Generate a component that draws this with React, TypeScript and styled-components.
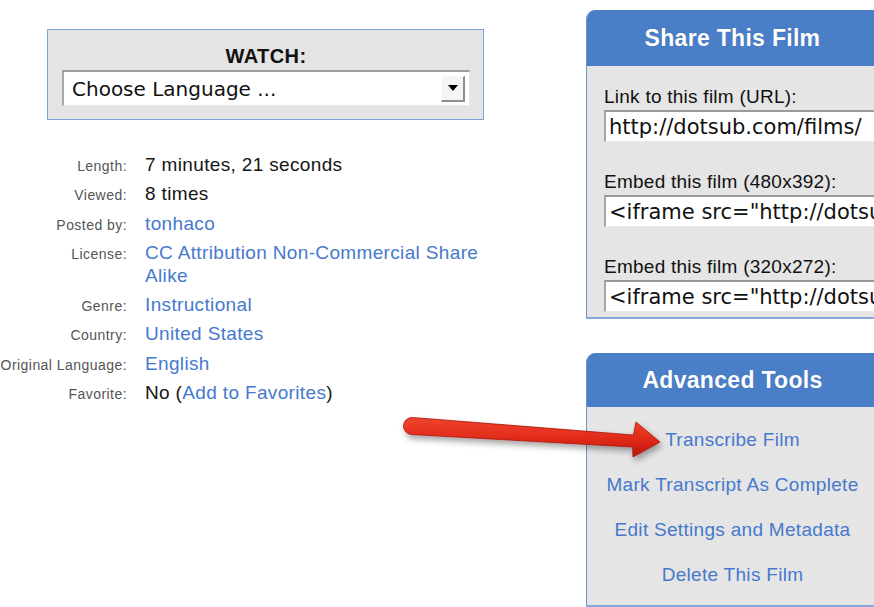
import { Fragment, type ReactNode } from "react";
import styled, { createGlobalStyle } from "styled-components";

const GlobalStyle = createGlobalStyle`
  html, body {
    margin: 0;
    padding: 0;
    overflow: hidden;
    background: #fff;
  }
  body {
    font-family: "Liberation Sans", Arial, Helvetica, sans-serif;
  }
`;

const LINK_BLUE = "#4679cd";

const Page = styled.div`
  position: relative;
  display: flex;
  width: 878px;
  height: 607px;
`;

const MainColumn = styled.div`
  width: 586px;
  flex-shrink: 0;
  padding-top: 29px;
`;

const SideColumn = styled.div`
  width: 292px;
  flex-shrink: 0;
  padding-top: 10px;
  display: flex;
  flex-direction: column;
  gap: 34px;
`;

/* ---- watch box ---- */

const WatchBox = styled.div`
  margin-left: 47px;
  box-sizing: content-box;
  width: 408px;
  background: #e4e4e4;
  border: 1px solid #7ea1d8;
  padding: 14px 13px 13px 14px;
`;

const WatchTitle = styled.div`
  font-weight: bold;
  font-size: 20px;
  line-height: 24px;
  text-align: center;
  color: #111;
  letter-spacing: 0.4px;
`;

const LanguageSelect = styled.div`
  margin-top: 2px;
  height: 33px;
  display: flex;
  align-items: center;
  justify-content: space-between;
  background: #fff;
  border-top: 2px solid #9c9c9c;
  border-left: 2px solid #a6a6a6;
  border-right: 1px solid #e8e8e8;
  border-bottom: 1px solid #ececec;
  padding-left: 8px;
  padding-right: 4px;
  font-family: "DejaVu Sans", sans-serif;
  font-size: 20px;
  color: #111;
`;

const SelectButton = styled.div`
  width: 21px;
  height: 23px;
  background: #f4f4f4;
  border-top: 1px solid #fafafa;
  border-left: 1px solid #fafafa;
  border-right: 2px solid #8e8e8e;
  border-bottom: 2px solid #8e8e8e;
  display: flex;
  align-items: center;
  justify-content: center;

  &::after {
    content: "";
    border-left: 5px solid transparent;
    border-right: 5px solid transparent;
    border-top: 6px solid #000;
  }
`;

/* ---- film details ---- */

const DetailGrid = styled.div`
  margin-top: 33px;
  display: grid;
  grid-template-columns: 127px 360px;
  column-gap: 18px;
  row-gap: 6.3px;
  align-items: baseline;
`;

const DetailLabel = styled.div`
  font-size: 14px;
  letter-spacing: 0.45px;
  color: #555;
  text-align: right;
  white-space: nowrap;
  direction: rtl;
`;

const DetailValue = styled.div`
  font-size: 19px;
  line-height: 23px;
  letter-spacing: 0.35px;
  color: #151515;
`;

const TextLink = styled.a`
  color: ${LINK_BLUE};
  text-decoration: none;
  cursor: pointer;
`;

/* ---- side panels ---- */

const Panel = styled.div`
  background: #e5e5e5;
  border-left: 1px solid #6d95d3;
  border-bottom: 2px solid #86a8dc;
  border-top-left-radius: 9px;
  overflow: hidden;
`;

const PanelHeader = styled.div<{ $height: number }>`
  height: ${(p) => p.$height}px;
  line-height: ${(p) => p.$height}px;
  background: #4a7fc8;
  color: #fff;
  font-weight: bold;
  font-size: 23px;
  letter-spacing: 0.3px;
  text-align: center;
  text-shadow: 0 0 1px rgba(30, 60, 120, 0.4);
`;

const ShareBody = styled.div`
  padding: 21px 0 5px 17px;
  display: flex;
  flex-direction: column;
  gap: 30px;
`;

const ShareField = styled.label`
  display: flex;
  flex-direction: column;
  gap: 3px;
`;

const ShareLabel = styled.span`
  font-size: 19px;
  line-height: 20px;
  letter-spacing: 0.25px;
  color: #111;
`;

const ShareInput = styled.input`
  box-sizing: border-box;
  width: 290px;
  height: 32px;
  margin: 0;
  padding: 0 0 0 3px;
  background: #fff;
  border-top: 2px solid #9a9a9a;
  border-left: 2px solid #a4a4a4;
  border-right: 1px solid #e6e6e6;
  border-bottom: 1px solid #e9e9e9;
  font-family: "DejaVu Sans", sans-serif;
  font-size: 21px;
  color: #111;
  outline: none;
`;

const ToolList = styled.div`
  padding: 10px 0 8px;
  display: flex;
  flex-direction: column;
  align-items: center;
`;

const ToolLink = styled(TextLink)`
  font-size: 19px;
  line-height: 45px;
  letter-spacing: 0.3px;
`;

const PointerArrow = styled.svg`
  position: absolute;
  left: 395px;
  top: 410px;
  overflow: visible;
`;

const details: { label: string; value: ReactNode }[] = [
  { label: "Length:", value: "7 minutes, 21 seconds" },
  { label: "Viewed:", value: "8 times" },
  { label: "Posted by:", value: <TextLink>tonhaco</TextLink> },
  {
    label: "License:",
    value: <TextLink>CC Attribution Non-Commercial Share Alike</TextLink>,
  },
  { label: "Genre:", value: <TextLink>Instructional</TextLink> },
  { label: "Country:", value: <TextLink>United States</TextLink> },
  { label: "Original Language:", value: <TextLink>English</TextLink> },
  {
    label: "Favorite:",
    value: (
      <>
        No (<TextLink>Add to Favorites</TextLink>)
      </>
    ),
  },
];

const shareFields = [
  { label: "Link to this film (URL):", value: "http://dotsub.com/films/" },
  {
    label: "Embed this film (480x392):",
    value: '<iframe src="http://dotsub.com/media/',
  },
  {
    label: "Embed this film (320x272):",
    value: '<iframe src="http://dotsub.com/media/',
  },
];

const tools = [
  "Transcribe Film",
  "Mark Transcript As Complete",
  "Edit Settings and Metadata",
  "Delete This Film",
];

export default function App() {
  return (
    <Page>
      <GlobalStyle />
      <MainColumn>
        <WatchBox>
          <WatchTitle>WATCH:</WatchTitle>
          <LanguageSelect>
            <span>Choose Language ...</span>
            <SelectButton />
          </LanguageSelect>
        </WatchBox>

        <DetailGrid>
          {details.map((d) => (
            <Fragment key={d.label}>
              <DetailLabel>
                <bdi>{d.label}</bdi>
              </DetailLabel>
              <DetailValue>{d.value}</DetailValue>
            </Fragment>
          ))}
        </DetailGrid>
      </MainColumn>

      <SideColumn>
        <Panel>
          <PanelHeader $height={56}>Share This Film</PanelHeader>
          <ShareBody>
            {shareFields.map((f) => (
              <ShareField key={f.label}>
                <ShareLabel>{f.label}</ShareLabel>
                <ShareInput readOnly value={f.value} />
              </ShareField>
            ))}
          </ShareBody>
        </Panel>

        <Panel>
          <PanelHeader $height={54}>Advanced Tools</PanelHeader>
          <ToolList>
            {tools.map((t) => (
              <ToolLink key={t}>{t}</ToolLink>
            ))}
          </ToolList>
        </Panel>
      </SideColumn>

      {/* red pointer arrow aimed at the first tool link */}
      <PointerArrow width="280" height="60" viewBox="0 0 280 60">
        <defs>
          <linearGradient id="arrowFill" x1="0" y1="0" x2="0" y2="1">
            <stop offset="0" stopColor="#f0452f" />
            <stop offset="0.55" stopColor="#e02a18" />
            <stop offset="1" stopColor="#b9160b" />
          </linearGradient>
          <filter id="arrowShadow" x="-10%" y="-50%" width="120%" height="200%">
            <feDropShadow dx="2" dy="4" stdDeviation="3" floodColor="#000" floodOpacity="0.35" />
          </filter>
        </defs>
        <path
          d="M17.6 7.5 L238.4 25 L241 12 L265 32 L238 47 L237.6 37 L16.4 24.5 A8.5 8.5 0 0 1 17.6 7.5 Z"
          fill="url(#arrowFill)"
          stroke="#a8140a"
          strokeWidth="0.8"
          strokeLinejoin="round"
          filter="url(#arrowShadow)"
        />
      </PointerArrow>
    </Page>
  );
}
